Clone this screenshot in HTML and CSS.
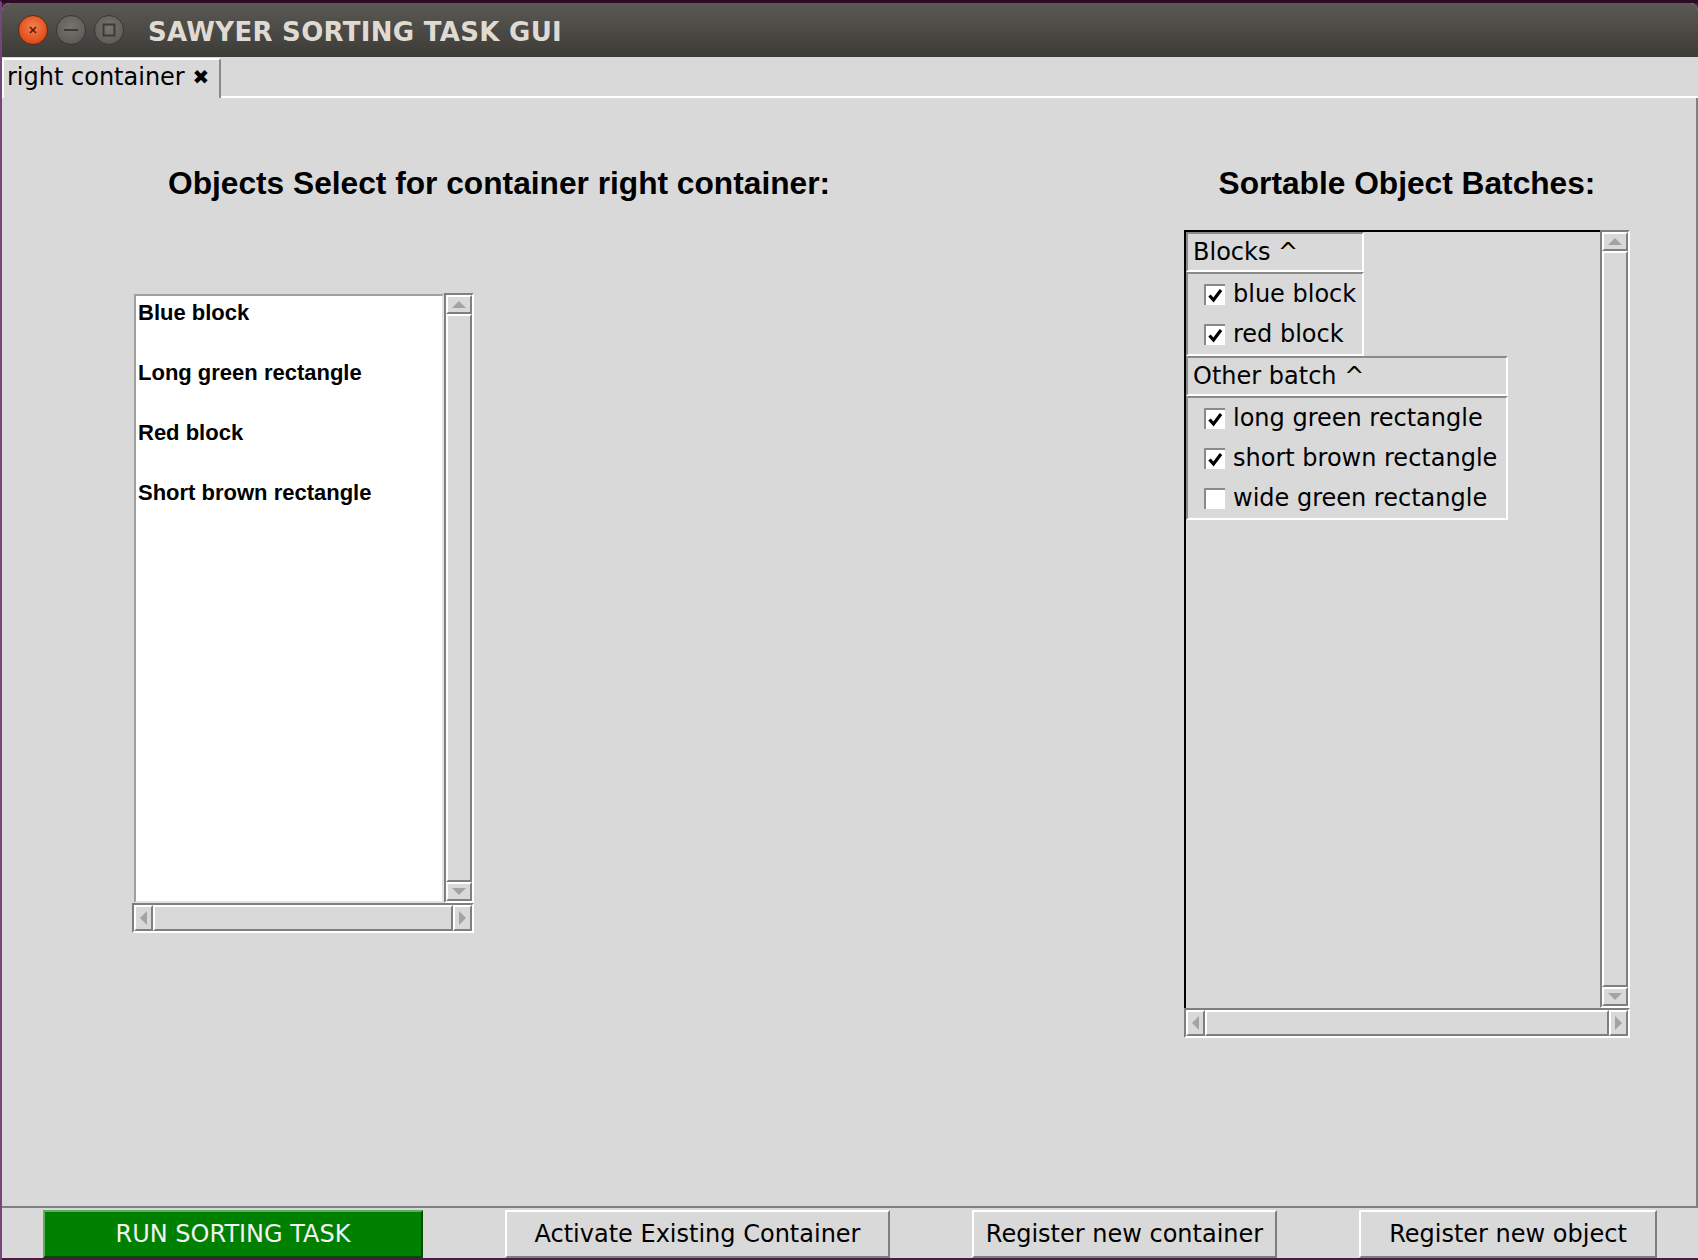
FILE: index.html
```html
<!DOCTYPE html>
<html>
<head>
<meta charset="utf-8">
<link rel="stylesheet" href="styles.css">
</head>
<body>
<div class="desk">
  <div class="window">
    <div class="titlebar">
      <div class="wbtns">
        <span class="wb close"><svg width="10" height="10" viewBox="0 0 10 10"><path d="M2 2L8 8M8 2L2 8" stroke="#5a1a08" stroke-width="1.6"/></svg></span>
        <span class="wb min"><svg width="14" height="4" viewBox="0 0 14 4"><rect x="0" y="1" width="14" height="2" fill="#3b3a36"/></svg></span>
        <span class="wb max"><svg width="14" height="14" viewBox="0 0 14 14"><rect x="1.5" y="1.5" width="11" height="11" fill="none" stroke="#3b3a36" stroke-width="2"/></svg></span>
      </div>
      <div class="title">SAWYER SORTING TASK GUI</div>
    </div>
    <div class="tabrow">
      <div class="tab">right container <span class="tabx">✖</span></div>
      <div class="tabfill"></div>
    </div>
    <div class="pane">
      <div class="col-left">
        <h2 class="heading h-left">Objects Select for container right container:</h2>
        <div class="scrollbox sb-left">
          <div class="listbox">
            <div class="li">Blue block</div>
            <div class="li">Long green rectangle</div>
            <div class="li">Red block</div>
            <div class="li">Short brown rectangle</div>
          </div>
          <div class="vscroll">
            <div class="arrow"><span class="tri-up"></span></div>
            <div class="slider"></div>
            <div class="arrow"><span class="tri-down"></span></div>
          </div>
          <div class="hscroll">
            <div class="arrow harrow"><span class="tri-left"></span></div>
            <div class="slider"></div>
            <div class="arrow harrow"><span class="tri-right"></span></div>
          </div>
        </div>
      </div>
      <div class="col-right">
        <h2 class="heading">Sortable Object Batches:</h2>
        <div class="scrollbox sb-right">
          <div class="canvas">
            <div class="ghead g-blocks">Blocks ^</div>
            <div class="gbody g-blocks">
              <div class="cb"><span class="box"><svg width="17" height="17" viewBox="0 0 17 17"><path d="M2.5 8.5L6.5 13L14 3" fill="none" stroke="#000" stroke-width="3.2"/></svg></span>blue block</div>
              <div class="cb"><span class="box"><svg width="17" height="17" viewBox="0 0 17 17"><path d="M2.5 8.5L6.5 13L14 3" fill="none" stroke="#000" stroke-width="3.2"/></svg></span>red block</div>
            </div>
            <div class="ghead g-other">Other batch ^</div>
            <div class="gbody g-other">
              <div class="cb"><span class="box"><svg width="17" height="17" viewBox="0 0 17 17"><path d="M2.5 8.5L6.5 13L14 3" fill="none" stroke="#000" stroke-width="3.2"/></svg></span>long green rectangle</div>
              <div class="cb"><span class="box"><svg width="17" height="17" viewBox="0 0 17 17"><path d="M2.5 8.5L6.5 13L14 3" fill="none" stroke="#000" stroke-width="3.2"/></svg></span>short brown rectangle</div>
              <div class="cb"><span class="box"></span>wide green rectangle</div>
            </div>
          </div>
          <div class="vscroll">
            <div class="arrow"><span class="tri-up"></span></div>
            <div class="slider"></div>
            <div class="arrow"><span class="tri-down"></span></div>
          </div>
          <div class="hscroll">
            <div class="arrow harrow"><span class="tri-left"></span></div>
            <div class="slider"></div>
            <div class="arrow harrow"><span class="tri-right"></span></div>
          </div>
        </div>
      </div>
    </div>
    <div class="bottombar">
      <div class="btn btn-run">RUN SORTING TASK</div>
      <div class="btn btn-activate">Activate Existing Container</div>
      <div class="btn btn-regc">Register new container</div>
      <div class="btn btn-rego">Register new object</div>
    </div>
  </div>
</div>
</body>
</html>
```
FILE: styles.css
```css
* { box-sizing: border-box; }
html, body { margin: 0; padding: 0; }
body {
  width: 1698px;
  height: 1260px;
  overflow: hidden;
  background: #4a1c44;
  font-family: "DejaVu Sans", sans-serif;
  color: #000;
}
.desk {
  height: 1260px;
  border-top: 3px solid #2c0b26;
  border-left: 2px solid #74467a;
}
.window {
  width: 1696px;
  height: 1255px;
  display: flex;
  flex-direction: column;
  background: #d9d9d9;
  border-radius: 8px 8px 0 0;
  overflow: hidden;
}
.titlebar {
  height: 54px;
  flex: none;
  background: linear-gradient(#5b5954, #3c3b37);
  display: flex;
  align-items: center;
  padding-left: 16px;
}
.wbtns { display: flex; gap: 8px; }
.wb {
  width: 30px;
  height: 30px;
  border-radius: 50%;
  display: flex;
  align-items: center;
  justify-content: center;
}
.close {
  background: radial-gradient(circle at 50% 40%, #f4814f, #df4d19 70%, #c9400f);
  border: 1px solid #5c2a16;
}
.min, .max {
  background: radial-gradient(circle at 50% 40%, #75746f, #5f5e5a 70%, #56554f);
  border: 1px solid #383733;
}
.title {
  margin-left: 24px;
  padding-top: 4px;
  font-family: "DejaVu Sans", sans-serif;
  font-weight: bold;
  font-size: 26px;
  letter-spacing: 0.3px;
  color: #dfdbd2;
  white-space: nowrap;
}
.tabrow {
  height: 41px;
  flex: none;
  display: flex;
  align-items: flex-end;
}
.tab {
  width: 219px;
  height: 40px;
  border-top: 2px solid #ffffff;
  border-left: 2px solid #ffffff;
  border-right: 2px solid #8a8a8a;
  border-top-right-radius: 3px;
  padding: 3px 0 0 3px;
  font-size: 24px;
  line-height: 28px;
  white-space: nowrap;
}
.tabx { font-size: 20px; vertical-align: 1px; }
.tabfill { flex: 1; height: 2px; background: #ffffff; }
.pane {
  flex: none;
  height: 1110px;
  display: flex;
  border-right: 2px solid #808080;
  border-bottom: 2px solid #808080;
}
.col-left { width: 1182px; padding-top: 67px; }
.col-right { width: 446px; padding-top: 67px; }
.heading {
  margin: 0;
  height: 36px;
  font-family: "Liberation Sans", Arial, sans-serif;
  font-weight: bold;
  font-size: 31.7px;
  line-height: 36px;
  white-space: nowrap;
}
.h-left { padding-left: 166px; }
.col-right .heading { text-align: center; }

.scrollbox { display: grid; }
.sb-left {
  margin: 92px 0 0 130px;
  grid-template-columns: 312px 30px;
  grid-template-rows: 610px 30px;
}
.sb-right {
  margin-top: 29px;
  grid-template-columns: 416px 30px;
  grid-template-rows: 778px 30px;
}
.listbox {
  margin: 1px 0 0 2px;
  background: #ffffff;
  border: 2px solid;
  border-color: #a0a0a0 #e2e2e2 #e2e2e2 #a0a0a0;
  padding: 2px 0 0 2px;
  font-family: "Liberation Sans", Arial, sans-serif;
  font-weight: bold;
  font-size: 22px;
}
.li { height: 60px; line-height: 30px; white-space: nowrap; }

.vscroll, .hscroll {
  display: flex;
  border: 2px solid;
  border-color: #7f7f7f #ffffff #ffffff #7f7f7f;
  background: #d9d9d9;
}
.vscroll { flex-direction: column; }
.hscroll { grid-column: 1 / 3; }
.arrow {
  flex: none;
  height: 19px;
  border: 2px solid;
  border-color: #ffffff #7f7f7f #7f7f7f #ffffff;
  display: flex;
  align-items: center;
  justify-content: center;
}
.harrow { height: auto; width: 19px; }
.slider {
  flex: 1;
  border: 2px solid;
  border-color: #ffffff #7f7f7f #7f7f7f #ffffff;
}
.tri-up { border-left: 7px solid transparent; border-right: 7px solid transparent; border-bottom: 7px solid #a3a3a3; }
.tri-down { border-left: 7px solid transparent; border-right: 7px solid transparent; border-top: 7px solid #a3a3a3; }
.tri-left { border-top: 7px solid transparent; border-bottom: 7px solid transparent; border-right: 7px solid #a3a3a3; }
.tri-right { border-top: 7px solid transparent; border-bottom: 7px solid transparent; border-left: 7px solid #a3a3a3; }

.canvas {
  border-top: 2px solid #000;
  border-left: 2px solid #000;
  background: #d9d9d9;
  display: flex;
  flex-direction: column;
  align-items: flex-start;
}
.ghead, .gbody {
  border: 2px solid;
  border-color: #8a8a8a #ffffff #ffffff #8a8a8a;
  font-size: 24px;
  white-space: nowrap;
}
.ghead { height: 40px; line-height: 36px; padding-left: 5px; }
.g-blocks { width: 178px; }
.g-other { width: 322px; }
.cb {
  height: 40px;
  display: flex;
  align-items: center;
  padding-left: 16px;
  line-height: 38px;
}
.box {
  width: 21px;
  height: 21px;
  margin-right: 8px;
  background: #ffffff;
  border-top: 2px solid #8a8a8a;
  border-left: 2px solid #8a8a8a;
  display: flex;
  align-items: center;
  justify-content: center;
}

.bottombar {
  flex: none;
  height: 50px;
  display: flex;
  gap: 82px;
  padding: 2px 0 0 41px;
}
.btn {
  height: 48px;
  border: 2px solid;
  border-color: #ffffff #7f7f7f #7f7f7f #ffffff;
  font-size: 24px;
  display: flex;
  align-items: center;
  justify-content: center;
  white-space: nowrap;
}
.btn-run {
  width: 380px;
  background: #008000;
  color: #f2f2f2;
  border-color: #5fae5f #004d00 #004d00 #5fae5f;
}
.btn-activate { width: 385px; }
.btn-regc { width: 305px; }
.btn-rego { width: 298px; }
```
